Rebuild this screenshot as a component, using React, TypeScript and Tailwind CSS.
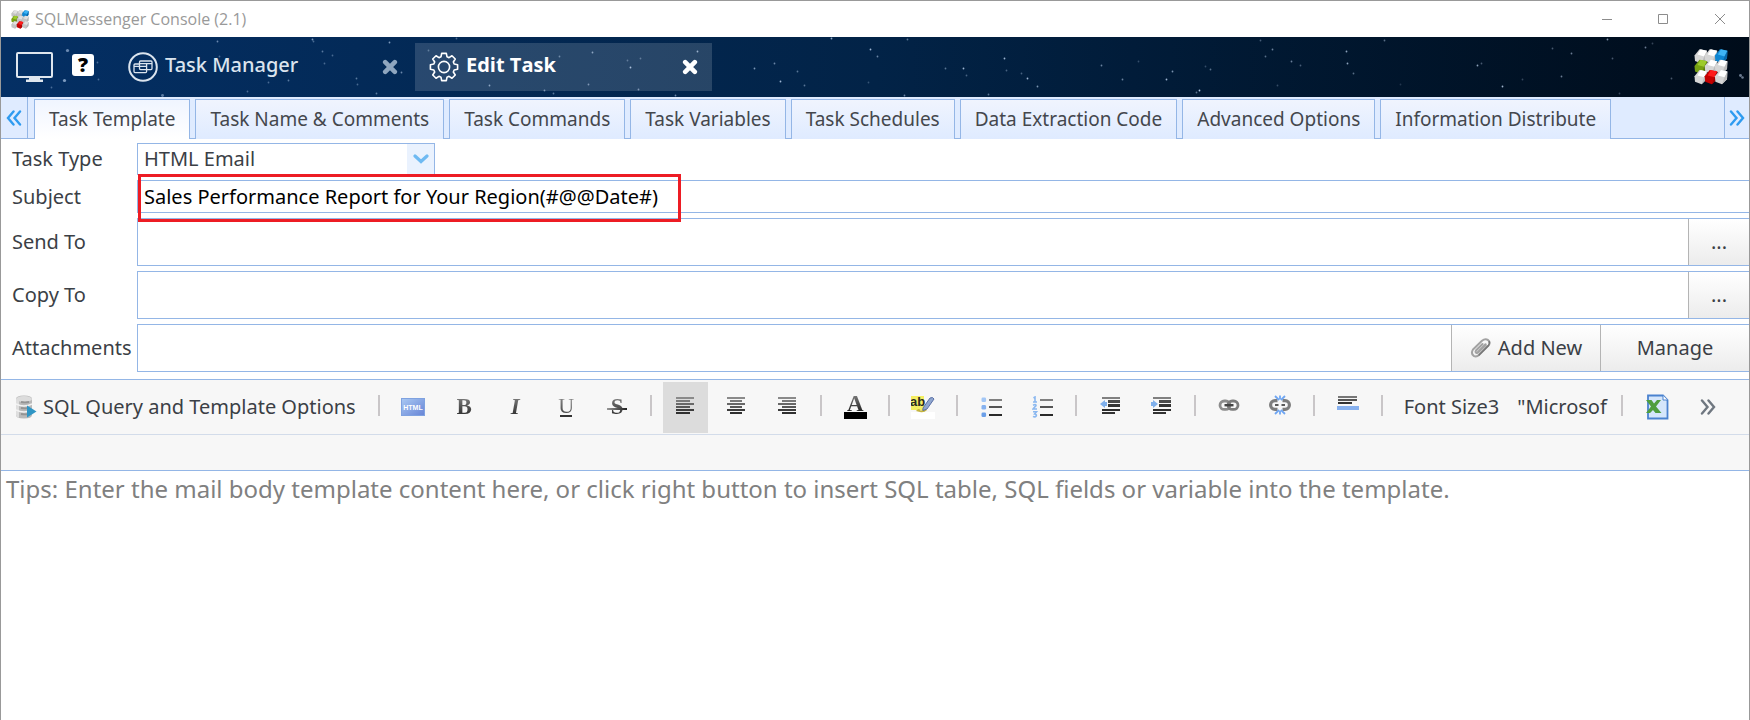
import React from "react";

const STARS: [number, number, number, number][] = [
  [67, 50, 1.8, 0.6], [64, 80, 1.8, 0.7], [51, 87, 1, 0.4], [97, 62, 1, 0.4], [98, 79, 1, 0.4], [162, 95, 1.6, 0.5],
  [217, 41, 1, 0.6], [219, 56, 1, 0.4], [247, 91, 1, 0.4], [268, 82, 1, 0.4], [288, 80, 1, 0.5], [312, 39, 1, 0.7],
  [313, 41, 1, 0.4], [322, 51, 1, 0.5], [324, 63, 1, 0.4], [332, 55, 1, 0.4], [356, 78, 1, 0.5], [357, 84, 1, 0.4],
  [389, 42, 1, 0.7], [376, 93, 1, 0.5], [401, 72, 1, 0.6], [456, 38, 1, 0.4], [428, 50, 1, 0.4], [489, 85, 1, 0.7],
  [544, 90, 1, 0.6], [553, 93, 1, 0.5], [559, 56, 1, 0.5], [592, 52, 1, 0.7], [588, 84, 1, 0.6], [630, 67, 1, 0.9],
  [627, 60, 1, 0.4], [640, 58, 1, 0.4], [638, 89, 1, 0.6], [675, 95, 1, 0.6], [697, 51, 1, 0.8], [754, 68, 1, 0.7],
  [774, 63, 1, 0.6], [780, 81, 1, 0.9], [797, 71, 1, 0.5], [804, 85, 1, 0.5], [831, 38, 1, 0.8], [870, 49, 1, 0.9],
  [877, 56, 1, 0.6], [907, 39, 1, 0.5], [868, 82, 1, 0.3], [945, 68, 1, 0.5], [963, 68, 1, 0.9], [966, 75, 1, 0.4],
  [1004, 58, 1, 0.9], [1006, 70, 1, 0.4], [1021, 73, 1, 0.4], [1027, 78, 1, 0.9], [1037, 86, 1, 0.7], [904, 95, 1, 0.6],
  [988, 94, 1, 0.5], [1101, 65, 1, 0.6], [1122, 79, 1, 0.6], [1138, 61, 1, 0.3], [1172, 71, 1, 0.7], [1166, 79, 1, 0.9],
  [1199, 90, 1, 1], [1196, 92, 1, 0.5], [1210, 69, 1, 0.5], [1205, 66, 1, 0.3], [1260, 40, 1, 0.4], [1265, 56, 1, 0.5],
  [1272, 49, 1, 0.6], [1291, 61, 1, 0.6], [1300, 65, 1, 0.4], [1277, 85, 1, 0.3], [1346, 51, 1, 0.8], [1347, 63, 1, 0.8],
  [1353, 73, 1, 0.5], [1384, 40, 1, 0.5], [1477, 65, 1, 0.8], [1481, 63, 1, 0.4], [1502, 86, 1, 0.9], [1552, 48, 1, 0.4],
  [1571, 53, 1, 0.6], [1561, 76, 1, 0.6], [1607, 39, 1, 0.7], [1612, 58, 1, 0.4], [1645, 47, 1, 0.6], [1652, 43, 1, 0.3],
  [1671, 78, 1, 0.4], [1740, 75, 1.6, 0.6], [1742, 77, 1.4, 0.6], [1619, 93, 1, 0.3], [1522, 79, 1, 0.3], [1400, 84, 1, 0.2],
];

function Logo({ className, small = false }: { className: string; small?: boolean }) {
  const white = small ? ["#e0e0e0", "#c4c4c4", "#b4b4b4"] : ["#ffffff", "#d6d6d6", "#bdbdbd"];
  const tones: Record<string, string[]> = {
    "0-2": ["#3fb4f5", "#0f86d2", "#0a66a8"],
    "1-0": ["#9ccb2b", "#76a012", "#587a0c"],
    "2-1": ["#ff1a1a", "#c40000", "#a00000"],
  };
  return (
    <svg viewBox="0 0 34 36" className={className} aria-hidden="true">
      {[0, 1, 2].map((r) =>
        [0, 1, 2].map((c) => {
          const t = tones[`${r}-${c}`] ?? white;
          return (
            <g key={`${r}-${c}`} transform={`translate(${c * 10.2} ${r * 10.4})`}>
              <path d="M0.5 6.5 L5.5 0.3 L13 1.8 L12.6 9.5 L7.6 14.5 L1 12 Z" fill={t[1]} />
              <path d="M3.5 5.6 L6.5 0.3 L13 1.8 L10.2 7.4 Z" fill={t[0]} />
              <path d="M10.2 7.4 L13 1.8 L12.6 9.5 L7.6 14.5 Z" fill={t[2]} />
            </g>
          );
        })
      )}
    </svg>
  );
}

function CloseIcon() {
  return (
    <svg viewBox="0 0 16 16" className="size-4" aria-hidden="true">
      <path d="M3.2 3.2 12.8 12.8 M12.8 3.2 3.2 12.8" stroke="currentColor" strokeWidth="4.6" strokeLinecap="round" />
    </svg>
  );
}

function Chevrons({ right = false, className }: { right?: boolean; className: string }) {
  return (
    <svg viewBox="0 0 16 16" className={className} fill="none" stroke="currentColor" strokeWidth="2.4" strokeLinecap="round" aria-hidden="true">
      {right ? <path d="M2 1.5 7.5 8 2 14.5 M8.5 1.5 14 8 8.5 14.5" /> : <path d="M7.5 1.5 2 8 7.5 14.5 M14 1.5 8.5 8 14 14.5" />}
    </svg>
  );
}

function gearPath() {
  const pts: string[] = [];
  for (let i = 0; i < 8; i++) {
    const a = (i * Math.PI) / 4 - Math.PI / 2;
    [[-0.29, 10.6], [-0.17, 13.8], [0.17, 13.8], [0.29, 10.6]].forEach(([d, r]) => {
      pts.push(`${(15 + r * Math.cos(a + d)).toFixed(2)} ${(15 + r * Math.sin(a + d)).toFixed(2)}`);
    });
  }
  return `M${pts.join("L")}Z`;
}

const TABS = [
  "Task Template",
  "Task Name & Comments",
  "Task Commands",
  "Task Variables",
  "Task Schedules",
  "Data Extraction Code",
  "Advanced Options",
  "Information Distribute",
];

function Lines({ widths, align }: { widths: number[]; align: "start" | "middle" | "end" }) {
  return (
    <svg viewBox="0 0 18 18" className="mb-1 size-[18px]" shapeRendering="crispEdges" aria-hidden="true">
      {widths.map((w, i) => (
        <rect
          key={i}
          x={align === "start" ? 0 : align === "end" ? 18 - w : (18 - w) / 2}
          y={1 + i * 3}
          width={w}
          height="2"
          fill={["#8a8a8a", "#7a7a7a", "#686868", "#585858", "#3c3c3c", "#303030"][i]}
        />
      ))}
    </svg>
  );
}

function DentIcon({ inward }: { inward: boolean }) {
  return (
    <svg viewBox="0 0 20 18" className="mb-1 h-[18px] w-5" aria-hidden="true">
      <g shapeRendering="crispEdges">
        <rect x="2" y="1" width="18" height="2" fill="#808080" />
        <rect x="8" y="4" width="12" height="3" fill="#4a4a4a" />
        <rect x="8" y="8" width="12" height="3" fill="#333" />
        <rect x="2" y="13" width="18" height="2" fill="#2c2c2c" />
        <rect x="2" y="16" width="13" height="2" fill="#333" />
      </g>
      <path d={inward ? "M0 6h2V4l5 4-5 4v-2H0Z" : "M7 6H5V4L0 8l5 4v-2h2Z"} fill="#7fb0ec" />
    </svg>
  );
}

function ListIcon({ numbered }: { numbered: boolean }) {
  return (
    <svg viewBox="0 0 21 22" className="h-[22px] w-[21px]" aria-hidden="true">
      {numbered ? (
        <g fill="none" stroke="#8bb8f0" strokeWidth="1.6">
          <path d="M1.5 2 3 1v5M1 6h4" />
          <path d="M1 9.2q3-1.6 3 .4L1 13h4" />
          <path d="M1 15.7h3.5L2.6 18q2.4.4 1.6 2-1.2 1.6-3.2.3" />
        </g>
      ) : (
        <g>
          <rect x="0.5" y="1.5" width="4.6" height="4.6" rx="1.4" fill="#a3c7f6" />
          <rect x="0.5" y="9" width="4.6" height="4.6" rx="1.4" fill="#86b2f0" />
          <rect x="0.5" y="16.5" width="4.6" height="4.6" rx="1.4" fill="#6b9fe8" />
        </g>
      )}
      <g shapeRendering="crispEdges">
        <rect x="8" y="3" width="13" height="2" fill="#808080" />
        <rect x="8" y="10" width="13" height="2" fill="#555" />
        <rect x="8" y="18" width="13" height="2" fill="#2a2a2a" />
      </g>
    </svg>
  );
}

function LinkIcon({ broken }: { broken: boolean }) {
  return (
    <svg viewBox="0 0 22 20" className="mb-1 h-5 w-[22px]" fill="none" aria-hidden="true">
      {broken ? (
        <>
          <path d="M8.5 5.6H6a4.4 4.4 0 0 0 0 8.8h2.5M13.5 5.6H16a4.4 4.4 0 0 1 0 8.8h-2.5" stroke="#7d7d7d" strokeWidth="3.2" />
          <path d="M6 10H9.5M12.5 10H16" stroke="#5a5a5a" strokeWidth="2" />
          <path d="M6 1l4 4M11 .5V4.5M16 1l-4 4M6 19l4-4M11 19.5v-4M16 19l-4-4" stroke="#6fa6f2" strokeWidth="1.8" />
        </>
      ) : (
        <>
          <rect x="2" y="6" width="10" height="8.4" rx="4.2" stroke="#8c8c8c" strokeWidth="2.8" />
          <rect x="10" y="6" width="10" height="8.4" rx="4.2" stroke="#7c7c7c" strokeWidth="2.8" />
          <path d="M6.5 10.2h9" stroke="#444" strokeWidth="2.4" />
        </>
      )}
    </svg>
  );
}

function Tool({ label, active = false, children }: { label: string; active?: boolean; children: React.ReactNode }) {
  return (
    <button
      type="button"
      aria-label={label}
      className={`flex h-[51px] w-[45px] shrink-0 items-center justify-center ${active ? "bg-[#dcdcdc]" : ""}`}
    >
      {children}
    </button>
  );
}

function Sep() {
  return <span className="mr-[5px] mb-1 ml-1 h-[21px] w-[2px] shrink-0 bg-[#c9c6c8]" />;
}

const glyph =
  "bg-linear-to-b from-[#8a8a8a] to-[#222] bg-clip-text font-['Liberation_Serif',serif] text-[23px] leading-6 text-transparent";
const label = "w-[125px] shrink-0 text-[20px] text-[#3b3f46]";
const sideButton =
  "flex shrink-0 items-center justify-center border-l border-[#b4b4b4] bg-linear-to-b from-white to-[#ececec] text-[20px] text-[#3b3f46]";

export default function App() {
  return (
    <div className="flex min-h-screen flex-col border-x border-t border-[#999] bg-white font-['Noto_Sans',sans-serif]">
      <div className="flex h-9 items-center pl-2.5">
        <Logo small className="h-[19px] w-[18px]" />
        <span className="ml-1.5 font-['Open_Sans',sans-serif] text-base text-[#999]">SQLMessenger Console (2.1)</span>
        <div className="ml-auto flex text-[#8c8c8c]">
          <button type="button" aria-label="Minimize" className="flex h-9 w-14 items-center justify-center">
            <svg viewBox="0 0 10 10" className="size-2.5"><path d="M0 5.5H10" stroke="currentColor" /></svg>
          </button>
          <button type="button" aria-label="Maximize" className="flex h-9 w-14 items-center justify-center">
            <svg viewBox="0 0 10 10" className="size-2.5"><path d="M.5.5H9.5V9.5H.5Z" fill="none" stroke="currentColor" /></svg>
          </button>
          <button type="button" aria-label="Close" className="flex h-9 w-[58px] items-center justify-center">
            <svg viewBox="0 0 10 10" className="size-2.5"><path d="M0 0 10 10M10 0 0 10" stroke="currentColor" /></svg>
          </button>
        </div>
      </div>

      <header className="relative flex h-[60px] items-center overflow-hidden bg-linear-to-r from-[#042f64] via-[#022347] to-[#000c1a] pl-[15px]">
        <svg className="absolute inset-0 size-full" aria-hidden="true">
          {STARS.map(([x, y, r, o]) => (
            <circle key={`${x}-${y}`} cx={x - 0.5} cy={y - 36.5} r={r * 0.9} fill="#cfe4ff" opacity={o * 0.85} />
          ))}
        </svg>
        <button type="button" aria-label="Desktop" className="relative">
          <svg viewBox="0 0 37 30" className="h-[30px] w-[37px]" aria-hidden="true">
            <rect x="1" y="1" width="35" height="24" rx="1" fill="none" stroke="#dfe6ee" strokeWidth="2" />
            <path d="M13 25h11v2.500h3V30H10v-2.500h3Z" fill="#dfe6ee" />
          </svg>
        </button>
        <button
          type="button"
          className="relative mb-1 ml-[19px] flex size-[22px] items-center justify-center rounded-[3px] bg-white font-['Open_Sans',sans-serif] text-[20px] leading-5 font-extrabold text-black"
        >
          ?
        </button>
        <div className="relative ml-[21px] flex h-12 w-[297px] items-center pr-3.5 pl-3 text-[#dbe4ee]">
          <svg viewBox="0 0 32 32" className="size-8" fill="none" stroke="currentColor" aria-hidden="true">
            <circle cx="16" cy="16" r="13.8" strokeWidth="2" />
            <g strokeWidth="1.3">
              <rect x="12.5" y="10" width="12.5" height="8.6" rx="1" />
              <path d="M12.5 12.6H25M7 15.4h12.5M12.5 13H8q-1 0-1 1v6.6q0 1 1 1h10.6q1 0 1-1V13" />
            </g>
          </svg>
          <span className="mb-1 ml-1.5 text-[20px] font-medium">Task Manager</span>
          <button type="button" aria-label="Close Task Manager" className="ml-auto text-[#8fa6bf]">
            <CloseIcon />
          </button>
        </div>
        <div className="relative ml-[3px] flex h-12 w-[297px] items-center bg-white/15 pr-3.5 pl-3.5 text-white">
          <svg viewBox="0 0 30 30" className="size-[30px]" fill="none" stroke="currentColor" strokeLinejoin="round" strokeWidth="1.6" aria-hidden="true">
            <path d={gearPath()} />
            <circle cx="15" cy="15" r="5.6" />
          </svg>
          <span className="mb-1 ml-[7px] font-['Open_Sans',sans-serif] text-[20px] font-bold">Edit Task</span>
          <button type="button" aria-label="Close Edit Task" className="ml-auto">
            <CloseIcon />
          </button>
        </div>
        <Logo className="relative mr-[21px] ml-auto h-9 w-[34px]" />
      </header>

      <nav className="flex h-[42px] bg-[#dfebff] text-[19px] text-[#44474d]">
        <button type="button" aria-label="Scroll tabs left" className="flex w-[27px] shrink-0 items-center justify-center border-r border-b border-[#94b6e6] text-[#2e9bf0]">
          <Chevrons className="size-4" />
        </button>
        <span className="w-1.5 shrink-0 border-b border-[#94b6e6]" />
        {TABS.map((t, i) => (
          <React.Fragment key={t}>
            <button
              type="button"
              className={`mt-0.5 flex shrink-0 items-center border-x border-t border-[#94b6e6] bg-linear-to-b px-3.5 whitespace-nowrap ${
                i === 0 ? "from-[#f0f5ff] to-white" : "from-[#f0f4fe] to-[#dfebff]"
              }`}
            >
              {t}
            </button>
            {i < TABS.length - 1 && <span className="w-[5px] shrink-0 border-b border-[#94b6e6]" />}
          </React.Fragment>
        ))}
        <span className="flex-1 border-b border-[#94b6e6]" />
        <button type="button" aria-label="Scroll tabs right" className="flex w-[25px] shrink-0 items-center justify-center border-b border-l border-[#94b6e6] text-[#2e9bf0]">
          <Chevrons right className="size-4" />
        </button>
      </nav>

      <form className="flex flex-col gap-[5px] pt-1 pb-[7px] pl-[11px]" onSubmit={(e) => e.preventDefault()}>
        <div className="flex h-8 items-center">
          <label htmlFor="type" className={label}>Task Type</label>
          <div className="relative h-full w-[298px]">
            <select id="type" className="h-full w-full appearance-none border border-[#94b6e6] bg-white px-1.5 text-[20px] text-[#3b3f46]">
              <option>HTML Email</option>
            </select>
            <span className="pointer-events-none absolute inset-y-px right-px flex w-[27px] items-center justify-center bg-[#eaf2fe]">
              <svg viewBox="0 0 16 10" className="h-2.5 w-4" fill="none" aria-hidden="true">
                <path d="M2 2 8 7.5 14 2" stroke="#6fbaf2" strokeWidth="3.2" strokeLinecap="round" />
              </svg>
            </span>
          </div>
        </div>
        <div className="relative flex h-[33px] items-center">
          <label htmlFor="subject" className={label}>Subject</label>
          <input
            id="subject"
            defaultValue="Sales Performance Report for Your Region(#@@Date#)"
            className="h-full min-w-0 flex-1 border border-r-0 border-[#94b6e6] px-1.5 text-[20px] text-black outline-none"
          />
          <span className="pointer-events-none absolute -top-1.5 left-[126px] h-12 w-[543px] border-[3px] border-[#ed1c24]" />
        </div>
        <div className="flex h-12 items-center">
          <label htmlFor="to" className={label}>Send To</label>
          <div className="flex h-full flex-1 border-y border-l border-[#94b6e6]">
            <input id="to" className="min-w-0 flex-1 px-1.5 text-[20px] outline-none" />
            <button type="button" className={`${sideButton} w-[61px]`}>...</button>
          </div>
        </div>
        <div className="flex h-12 items-center">
          <label htmlFor="cc" className={label}>Copy To</label>
          <div className="flex h-full flex-1 border-y border-l border-[#94b6e6]">
            <input id="cc" className="min-w-0 flex-1 px-1.5 text-[20px] outline-none" />
            <button type="button" className={`${sideButton} w-[61px]`}>...</button>
          </div>
        </div>
        <div className="flex h-12 items-center">
          <label htmlFor="files" className={label}>Attachments</label>
          <div className="flex h-full flex-1 border-y border-l border-[#94b6e6]">
            <input id="files" className="min-w-0 flex-1 px-1.5 text-[20px] outline-none" />
            <button type="button" className={`${sideButton} w-[149px] gap-1.5`}>
              <svg viewBox="0 0 22 20" className="h-5 w-[22px]" fill="none" strokeLinecap="round" aria-hidden="true">
                <path
                  d="M7.5 14.5 15.5 6.2M3 11.5 12 2.8q3-2.4 6-.8 3 2.4.6 5.4L9 17q-2.6 2.4-5.4.8Q.6 15.4 3 11.5M12.5 6 6 12.5q-1 1.5.3 2.3 1 .6 2-.4L15.800 7"
                  stroke="#a2a2a2"
                  strokeWidth="2"
                />
                <path d="M9 17 18.6 7.4q1.4-2 .6-3.8" stroke="#777" strokeWidth="1.5" />
              </svg>
              Add New
            </button>
            <button type="button" className={`${sideButton} w-[149px]`}>Manage</button>
          </div>
        </div>
      </form>

      <div role="toolbar" className="flex h-14 items-center gap-1.5 overflow-hidden border-y border-t-[#94b6e6] border-b-[#d3dcea] bg-[#f7f7f7] pl-3.5 text-[20px] text-[#3b3f46]">
        <button type="button" className="mr-3 flex shrink-0 items-center gap-1.5 whitespace-nowrap">
          <svg viewBox="0 0 22 24" className="h-6 w-[22px]" aria-hidden="true">
            <path d="M1 4q0-3.5 8-3.5T17 4V20q0 3.5-8 3.5T1 20Z" fill="#b9b9b9" />
            <path d="M1 4v16q0 2 3 2.9V4Z" fill="#dedede" />
            <ellipse cx="9" cy="4" rx="8" ry="3" fill="#dcdcdc" />
            <path d="M1 9q8 4 16 0M1 15q8 4 16 0" stroke="#f2f2f2" strokeWidth="1.4" fill="none" />
            <path d="M6 7q4 .6 8 0M6 13q4 .6 8 0M6 19q4 .6 8 0" stroke="#949494" strokeWidth="1.8" fill="none" />
            <path d="M12 10.5 21.5 16.5 12 22.5Z" fill="#2f95c4" />
          </svg>
          SQL Query and Template Options
        </button>
        <Sep />
        <Tool label="HTML source">
          <svg viewBox="0 0 24 18" className="h-[18px] w-6" aria-hidden="true">
            <defs>
              <linearGradient id="htmlbg" x1="0" y1="0" x2="1" y2="1">
                <stop offset="0" stopColor="#a9c9f3" />
                <stop offset="1" stopColor="#6784d6" />
              </linearGradient>
            </defs>
            <rect x=".5" y=".5" width="23" height="17" fill="url(#htmlbg)" stroke="#7fa2e0" />
            <text x="12" y="12" textAnchor="middle" fontSize="7" fontWeight="700" fill="#fff" fontFamily="Liberation Sans, sans-serif">HTML</text>
          </svg>
        </Tool>
        <Tool label="Bold"><span className={`${glyph} font-bold`}>B</span></Tool>
        <Tool label="Italic"><span className={`${glyph} px-1 font-bold italic`}>I</span></Tool>
        <Tool label="Underline">
          <span className="flex flex-col items-center">
            <span className="h-[18px] bg-linear-to-b from-[#8a8a8a] to-[#444] bg-clip-text font-['Liberation_Serif',serif] text-[22px] leading-[18px] text-transparent">U</span>
            <span className="h-[2px] w-3 bg-[#333]" />
          </span>
        </Tool>
        <Tool label="Strikethrough">
          <span className="relative flex w-5 justify-center">
            <span className={`${glyph} font-bold`}>S</span>
            <span className="absolute inset-x-0 top-[13px] h-[2px] bg-linear-to-r from-[#999] to-[#222]" />
          </span>
        </Tool>
        <Sep />
        <Tool label="Align left" active><Lines align="start" widths={[18, 14, 18, 14, 18, 14]} /></Tool>
        <Tool label="Align center"><Lines align="middle" widths={[18, 12, 18, 12, 18, 12]} /></Tool>
        <Tool label="Align right"><Lines align="end" widths={[18, 14, 18, 14, 18, 14]} /></Tool>
        <Sep />
        <Tool label="Font color">
          <span className="flex flex-col items-center">
            <span className="h-4 bg-linear-to-b from-[#777] to-[#222] bg-clip-text font-['Liberation_Serif',serif] text-[23px] leading-4 font-bold text-transparent">A</span>
            <span className="h-[7px] w-[23px] bg-black" />
          </span>
        </Tool>
        <Sep />
        <Tool label="Highlight color">
          <svg viewBox="0 0 24 24" className="size-6" aria-hidden="true">
            <rect y="17" width="24" height="7" fill="#fff" />
            <rect x="0" y="1" width="13" height="14" fill="#f5ee62" />
            <text x="-1" y="11" fontSize="13" fontWeight="700" fill="#2b2b20" fontFamily="Liberation Sans, sans-serif">ab</text>
            <path d="M5 16q3-4 5 0l3-4 3 3q-3 3-7 2Z" fill="#c5b53e" />
            <path d="M12 13 19 3q3-1.5 4 1L16 14l-4 1.5Z" fill="#8fa6cf" stroke="#5a70a6" />
          </svg>
        </Tool>
        <Sep />
        <Tool label="Bulleted list"><ListIcon numbered={false} /></Tool>
        <Tool label="Numbered list"><ListIcon numbered /></Tool>
        <Sep />
        <Tool label="Decrease indent"><DentIcon inward={false} /></Tool>
        <Tool label="Increase indent"><DentIcon inward /></Tool>
        <Sep />
        <Tool label="Insert link"><LinkIcon broken={false} /></Tool>
        <Tool label="Remove link"><LinkIcon broken /></Tool>
        <Sep />
        <Tool label="Horizontal line">
          <svg viewBox="0 0 22 18" className="mb-2 h-[18px] w-[22px]" shapeRendering="crispEdges" aria-hidden="true">
            <path d="M1 3h19" stroke="#777" strokeWidth="2" />
            <path d="M1 6h19" stroke="#555" strokeWidth="2" />
            <path d="M1 9h14" stroke="#333" strokeWidth="2" />
            <path d="M0 14h22" stroke="#86b0ee" strokeWidth="4" />
          </svg>
        </Tool>
        <Sep />
        <button type="button" className="ml-2.5 shrink-0 whitespace-nowrap">Font Size3</button>
        <button type="button" className="ml-3 w-[94px] shrink-0 text-left whitespace-nowrap">"Microsof</button>
        <Sep />
        <Tool label="Export to Excel">
          <svg viewBox="0 0 24 26" className="h-[26px] w-6" aria-hidden="true">
            <path d="M3 1.5H18L22.5 6V24.5H3Z" fill="#d5e6fb" stroke="#4a82cf" strokeWidth="1.8" />
            <path d="M18 1.5V6h4.5" fill="#fff" stroke="#4a82cf" />
            <path d="M1 6H6.5L9 9.5 12 6h4l-5 6.5 5.5 6.5H10.500L8 16l-3 3H1l5-6.5Z" fill="#4f9e3f" />
          </svg>
        </Tool>
        <Tool label="More tools"><Chevrons right className="size-4 text-[#6f7780]" /></Tool>
      </div>
      <div className="h-9 border-b border-[#94b6e6] bg-[#f7f7f7]" />
      <textarea
        aria-label="Mail body"
        placeholder="Tips: Enter the mail body template content here, or click right button to insert SQL table, SQL fields or variable into the template."
        className="w-full flex-1 resize-none px-[5px] font-['Noto_Sans',sans-serif] text-[24px] leading-9 text-black outline-none placeholder:text-[#808080]"
      />
    </div>
  );
}
